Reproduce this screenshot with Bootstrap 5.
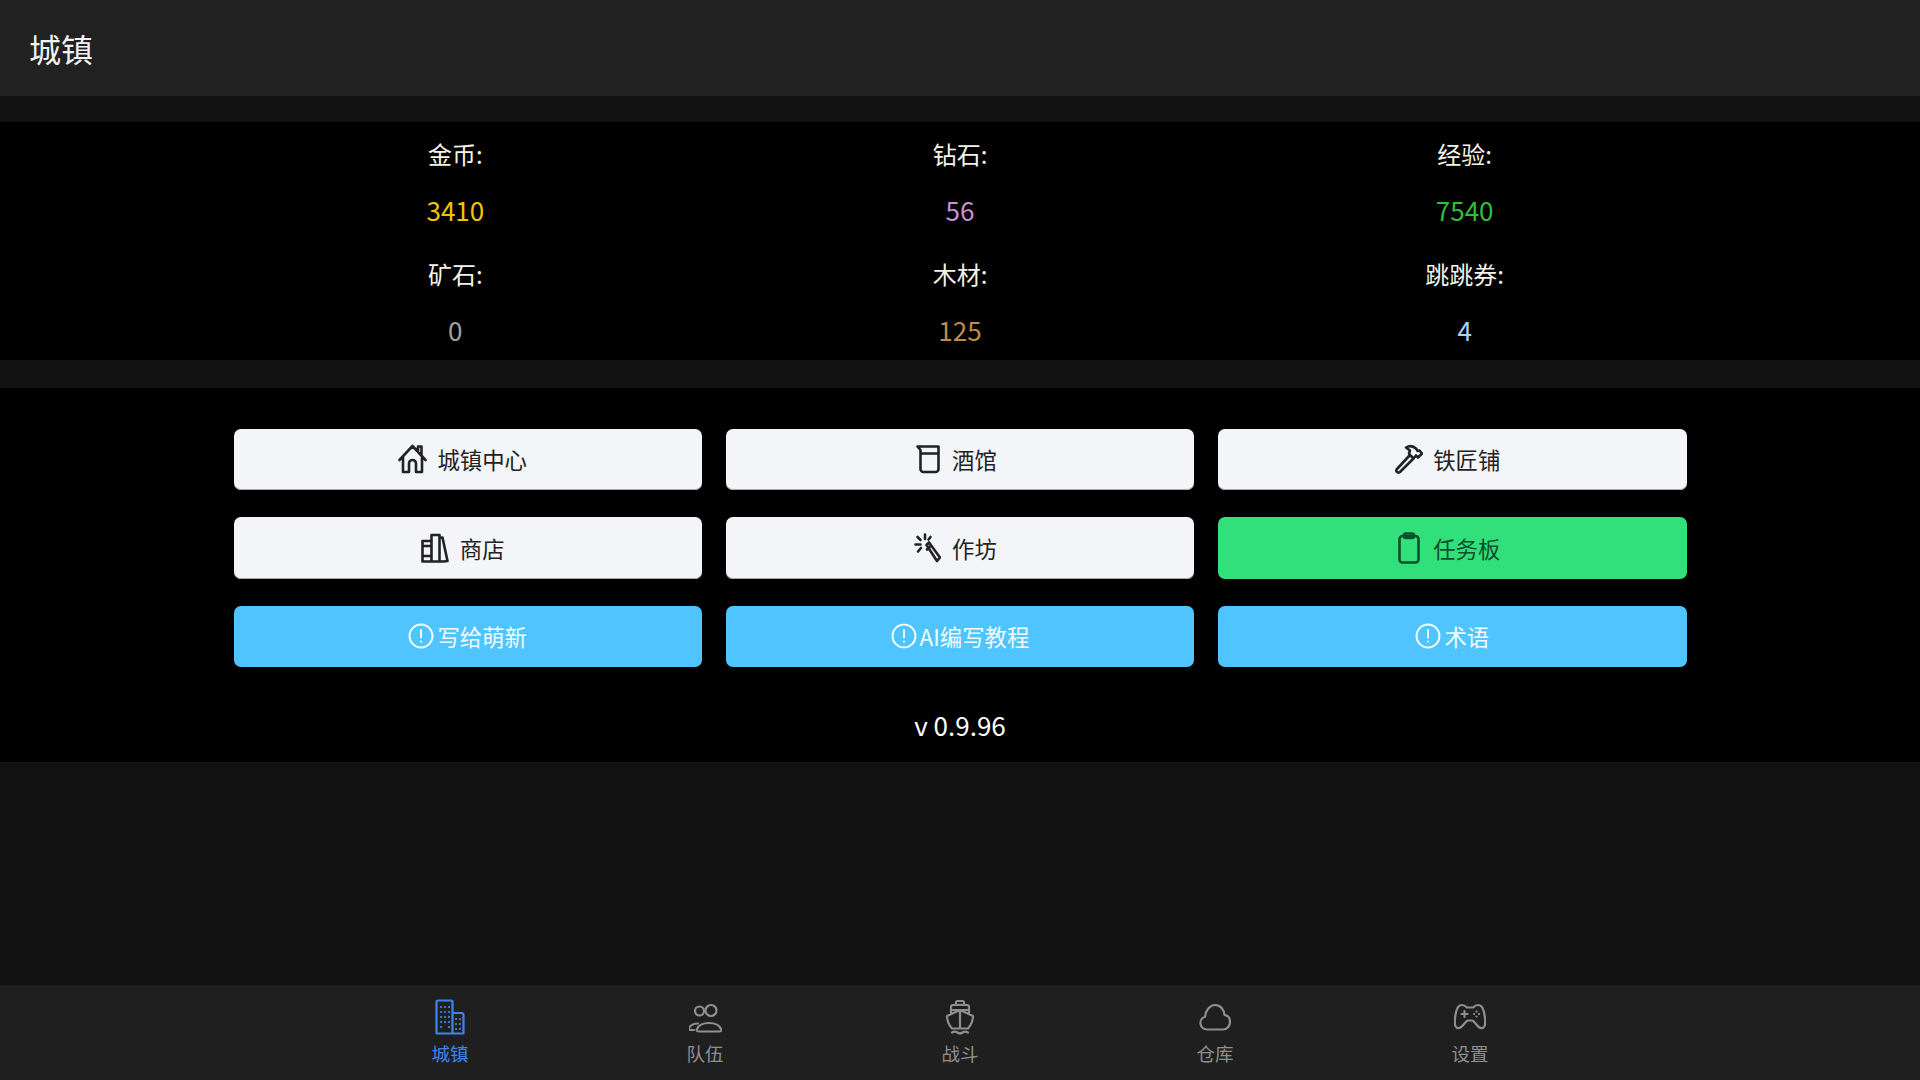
<!DOCTYPE html>
<html lang="zh-CN">
<head>
    <meta charset="UTF-8">
    <meta name="viewport" content="width=device-width, initial-scale=1.0">
    <title>城镇</title>
    <link rel="stylesheet" href="https://cdn.jsdelivr.net/npm/bootstrap@5.3.0/dist/css/bootstrap.min.css">
    <style>
        body {
            background: #121212;
            font-family: "Noto Sans CJK SC", "Liberation Sans", sans-serif;
            color: #f2f2f2;
            height: 1080px;
            overflow: hidden;
        }
        .top-bar {
            height: 96px;
            background: #212121;
            padding-left: 29px;
            font-size: 32px;
        }
        .panel-black { background: #000; }
        .stats-panel {
            margin-top: 26px;
            padding: 16px 0 14.5px;
        }
        .stats-grid {
            width: 1514px;
            row-gap: 32.5px;
            display: grid;
            grid-template-columns: repeat(3, 1fr);
        }
        .stat-label, .stat-value {
            line-height: 32px;
            font-size: 24px;
            text-align: center;
        }
        .stat-label { color: #f5f3e6; margin-bottom: 23.5px; }
        .stat-value { font-size: 26px; }
        .gold { color: #f5c400; }
        .gem { color: #c88fdc; }
        .exp { color: #2fbf3a; }
        .ore { color: #a0a0a0; }
        .wood { color: #c08a4a; }
        .ticket { color: #a5d4f5; }
        .town-panel {
            margin-top: 28px;
            padding: 40.5px 0 19px;
        }
        .town-grid {
            width: 1453px;
            display: grid;
            grid-template-columns: repeat(3, 1fr);
            gap: 27px 24px;
        }
        .town-btn {
            height: 61.5px;
            border: 0;
            border-radius: 7px;
            font-size: 22.4px;
            line-height: 1;
            padding: 0 11.5px 0 0;
            gap: 8.5px;
            background: #f4f5f9;
            color: #222;
            box-shadow: inset 0 -1px 0 #a9a9ad;
        }
        .btn-ico {
            width: 32px;
            flex: none;
            display: flex;
            justify-content: center;
        }
        .town-btn svg { fill: none; stroke: currentColor; stroke-width: 2.6; stroke-linecap: round; stroke-linejoin: round; }
        .town-btn.is-quest { background: #31e07a; color: #0f4f2a; box-shadow: none; }
        .town-btn.is-guide { background: #4fc4ff; color: #f2fbff; padding: 0; gap: 3px; box-shadow: none; }
        .town-btn.is-guide svg { stroke-width: 2; }
        .version-line {
            margin-top: 40px;
            line-height: 36px;
            font-size: 26px;
            color: #fff;
        }
        .bottom-nav {
            height: 95px;
            background: #1f1f1f;
        }
        .nav-slot {
            width: 255px;
            color: #8f8f8f;
            font-size: 18.5px;
            line-height: 24px;
            padding-top: 14px;
        }
        .nav-slot.is-active { color: #3f83ee; }
        .nav-slot svg { fill: none; stroke: currentColor; stroke-width: 2.2; stroke-linecap: round; stroke-linejoin: round; display: block; }
        .nav-icon { height: 42px; }
    </style>
</head>
<body class="d-flex flex-column">
    <div class="top-bar d-flex align-items-center">城镇</div>

    <section class="panel-black stats-panel">
        <div class="stats-grid mx-auto">
            <div><div class="stat-label">金币:</div><div class="stat-value gold">3410</div></div>
            <div><div class="stat-label">钻石:</div><div class="stat-value gem">56</div></div>
            <div><div class="stat-label">经验:</div><div class="stat-value exp">7540</div></div>
            <div><div class="stat-label">矿石:</div><div class="stat-value ore">0</div></div>
            <div><div class="stat-label">木材:</div><div class="stat-value wood">125</div></div>
            <div><div class="stat-label">跳跳券:</div><div class="stat-value ticket">4</div></div>
        </div>
    </section>

    <section class="panel-black town-panel">
        <div class="town-grid mx-auto">
            <button class="btn town-btn d-flex align-items-center justify-content-center">
                <span class="btn-ico"><svg width="29" height="30" viewBox="0 0 29 30"><path d="M1.500 16 14.500 2l13 14M20 6.500V2.500h3.500V12M5 12.500V28h6v-8.500a3.500 3.500 0 0 1 7 0V28h6V12.500"/></svg></span>
                城镇中心
            </button>
            <button class="btn town-btn d-flex align-items-center justify-content-center">
                <span class="btn-ico"><svg width="24" height="30" viewBox="0 0 24 30"><path d="M1.500 2.500h21V25a3 3 0 0 1-3 3H7.500a3 3 0 0 1-3-3V6ZM4.500 9.500h18"/></svg></span>
                酒馆
            </button>
            <button class="btn town-btn d-flex align-items-center justify-content-center">
                <span class="btn-ico"><svg width="28" height="30" viewBox="0 0 28 30"><path d="M2 25 15 11l3.500 3.500L5 28a1.800 1.800 0 0 1-2.800 0 1.800 1.800 0 0 1-.2-3ZM15 11l-1-1.500 1-3-4-3c4-2.500 8-1 10.500 1.500l1 2 2-.5L27 9.500l-4 4-2-2-2.500 3"/></svg></span>
                铁匠铺
            </button>
            <button class="btn town-btn d-flex align-items-center justify-content-center">
                <span class="btn-ico"><svg width="28" height="30" viewBox="0 0 28 30"><path d="M1.500 8h9v20.500h-9ZM1.500 13h9M1.500 23h9M10.500 2h8v26.500h-8ZM18.500 5l3-.5 5 23.500-4 .5h-4"/></svg></span>
                商店
            </button>
            <button class="btn town-btn d-flex align-items-center justify-content-center">
                <span class="btn-ico"><svg width="27" height="30" viewBox="0 0 27 30"><path d="M12.500 12 15 9.500l11 15-3 3.500ZM15.500 14l-2.500 2.500"/><path d="M11 1.500v4.500M3.500 4l3 3M1.500 11.500h5M4 18.500l3-3.500M16.500 4 14.500 6.500"/></svg></span>
                作坊
            </button>
            <button class="btn town-btn is-quest d-flex align-items-center justify-content-center">
                <span class="btn-ico"><svg width="22" height="32" viewBox="0 0 22 32"><rect x="1.500" y="4" width="19" height="26.500" rx="3"/><rect x="6" y="1.500" width="10" height="4.500" rx="2"/></svg></span>
                任务板
            </button>
            <button class="btn town-btn is-guide d-flex align-items-center justify-content-center">
                <svg width="26" height="26" viewBox="0 0 26 26"><circle cx="13" cy="13" r="11.500"/><path d="M13 7v7.500M13 18.500v.3"/></svg>
                写给萌新
            </button>
            <button class="btn town-btn is-guide d-flex align-items-center justify-content-center">
                <svg width="26" height="26" viewBox="0 0 26 26"><circle cx="13" cy="13" r="11.500"/><path d="M13 7v7.500M13 18.500v.3"/></svg>
                AI编写教程
            </button>
            <button class="btn town-btn is-guide d-flex align-items-center justify-content-center">
                <svg width="26" height="26" viewBox="0 0 26 26"><circle cx="13" cy="13" r="11.500"/><path d="M13 7v7.500M13 18.500v.3"/></svg>
                术语
            </button>
        </div>
        <div class="version-line text-center">v 0.9.96</div>
    </section>

    <div class="flex-grow-1"></div>

    <nav class="bottom-nav d-flex justify-content-center">
        <a class="nav-slot is-active d-flex flex-column align-items-center text-decoration-none" href="#">
            <div class="nav-icon">
                <svg width="30" height="37" viewBox="0 0 30 37"><path d="M1.500 34.500V3a1.500 1.500 0 0 1 1.500-1.500h13a1.500 1.500 0 0 1 1.500 1.500v31.500ZM17.500 14h9a2 2 0 0 1 2 2v18.500h-11Z"/><path d="M6 8h.1M10 8h.1M14 8h.1M6 13h.1M10 13h.1M14 13h.1M6 18h.1M10 18h.1M14 18h.1M6 23h.1M10 23h.1M14 23h.1M6 28h.1M14 28h.1M21 20h.1M25 20h.1M21 25h.1M25 25h.1M21 30h.1M25 30h.1"/></svg>
            </div>
            城镇
        </a>
        <a class="nav-slot d-flex flex-column align-items-center text-decoration-none" href="#">
            <div class="nav-icon">
                <svg width="33" height="37" viewBox="0 0 33 37"><circle cx="10.500" cy="12" r="4.500"/><circle cx="22" cy="11.500" r="5.500"/><path d="M7 31H3.500c-1.500 0-2-1-1.500-2 1.500-3 4-4.500 9-4.500M12 32.500c-2 0-2.800-1-2-2.500 1.500-3.500 5.500-6 12-6s10.500 2.500 12 6c.7 1.500 0 2.500-2 2.500Z" transform="translate(-2 0)"/></svg>
            </div>
            队伍
        </a>
        <a class="nav-slot d-flex flex-column align-items-center text-decoration-none" href="#">
            <div class="nav-icon">
                <svg width="30" height="38" viewBox="0 0 30 38"><path d="M11 6V3.500a1.500 1.500 0 0 1 1.500-1.500h5a1.500 1.500 0 0 1 1.500 1.500V6M6 15V8a2 2 0 0 1 2-2h14a2 2 0 0 1 2 2v7M6 11h18M15 11 2 17c0 5 2 9 5 12.500h16c3-3.500 5-7.500 5-12.500ZM15 11.500v18"/><path d="M7 33.500c2.500-1.500 3.500-1.500 5.500 0s3 1.500 5 0 3-1.500 5.500 0"/></svg>
            </div>
            战斗
        </a>
        <a class="nav-slot d-flex flex-column align-items-center text-decoration-none" href="#">
            <div class="nav-icon">
                <svg width="32" height="38" viewBox="0 0 32 38"><path d="M8 30.500a6.500 6.500 0 0 1-2-12.700C6.500 11.500 11 6 16 6c5.500 0 9 4.500 9.500 10 3.500.5 5.500 3.500 5.500 7 0 4-3 7.500-7 7.500Z"/></svg>
            </div>
            仓库
        </a>
        <a class="nav-slot d-flex flex-column align-items-center text-decoration-none" href="#">
            <div class="nav-icon">
                <svg width="32" height="38" viewBox="0 0 32 38"><path d="M8 6c2 0 4 1.500 5 2.500h6C20 7.500 22 6 24 6c3 0 4.500 2 5.500 5.500 1 3.500 2 9 1.500 14-.3 3-3 4.500-5.500 3-2.500-1.500-5-6-7-7h-5c-2 1-4.500 5.500-7 7-2.500 1.500-5.200 0-5.500-3-.5-5 .5-10.500 1.500-14C3.500 8 5 6 8 6Z"/><path d="M7.500 15h6M10.500 12v6M20 15h.1M25 15h.1M22.500 12.500h.1M22.500 17.500h.1"/></svg>
            </div>
            设置
        </a>
    </nav>

    <script src="https://cdn.jsdelivr.net/npm/bootstrap@5.3.0/dist/js/bootstrap.bundle.min.js"></script>
</body>
</html>
